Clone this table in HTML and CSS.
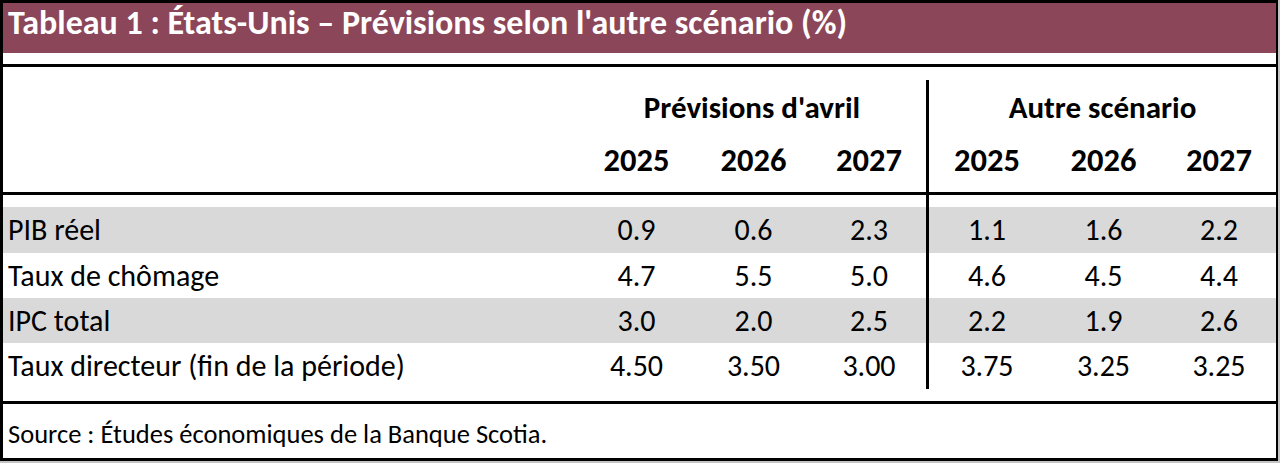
FILE: index.html
```html
<!DOCTYPE html>
<html lang="fr">
<head>
<meta charset="utf-8">
<title>Tableau 1</title>
<link rel="stylesheet" href="styles.css">
</head>
<body>
<div class="frame">
  <div class="title">Tableau 1 : États-Unis – Prévisions selon l'autre scénario (%)</div>
  <div class="title-gap"></div>
  <div class="table">
    <div class="row spacer-top"><div></div></div>
    <div class="row groups">
      <div class="label"></div>
      <div class="group g1">Prévisions d'avril</div>
      <div class="group g2 sep">Autre scénario</div>
    </div>
    <div class="row years">
      <div class="label"></div>
      <div class="cell">2025</div>
      <div class="cell">2026</div>
      <div class="cell">2027</div>
      <div class="cell sep">2025</div>
      <div class="cell">2026</div>
      <div class="cell">2027</div>
    </div>
    <div class="row gap">
      <div class="label"></div><div></div><div></div><div></div><div class="sep"></div><div></div><div></div>
    </div>
    <div class="row data shade tall">
      <div class="label">PIB réel</div>
      <div class="cell">0.9</div><div class="cell">0.6</div><div class="cell">2.3</div>
      <div class="cell sep">1.1</div><div class="cell">1.6</div><div class="cell">2.2</div>
    </div>
    <div class="row data">
      <div class="label">Taux de chômage</div>
      <div class="cell">4.7</div><div class="cell">5.5</div><div class="cell">5.0</div>
      <div class="cell sep">4.6</div><div class="cell">4.5</div><div class="cell">4.4</div>
    </div>
    <div class="row data shade">
      <div class="label">IPC total</div>
      <div class="cell">3.0</div><div class="cell">2.0</div><div class="cell">2.5</div>
      <div class="cell sep">2.2</div><div class="cell">1.9</div><div class="cell">2.6</div>
    </div>
    <div class="row data tall">
      <div class="label">Taux directeur (fin de la période)</div>
      <div class="cell">4.50</div><div class="cell">3.50</div><div class="cell">3.00</div>
      <div class="cell sep">3.75</div><div class="cell">3.25</div><div class="cell">3.25</div>
    </div>
    <div class="row spacer-bottom"><div></div></div>
  </div>
  <div class="source">Source : Études économiques de la Banque Scotia.</div>
</div>
</body>
</html>
```
FILE: styles.css
```css
html, body {
  margin: 0;
  padding: 0;
}
body {
  background: #c4c4c4;
  font-family: Carlito, Lato, "Open Sans", sans-serif;
  color: #000;
  width: 1280px;
  height: 463px;
  overflow: hidden;
}
.frame {
  box-sizing: border-box;
  width: 1278px;
  height: 461px;
  background: #fff;
  border-top: 3px solid #000;
  border-left: 3px solid #000;
  border-right: 2px solid #000;
  border-bottom: 3px solid #000;
  display: flex;
  flex-direction: column;
}
.title {
  box-sizing: border-box;
  height: 50px;
  background: #8c4659;
  color: #fff;
  font-weight: 700;
  font-size: 34px;
  line-height: 36px;
  padding: 2px 0 0 5px;
  white-space: nowrap;
}
.title-gap {
  height: 11px;
  border-bottom: 3px solid #000;
}
.table {
  display: flex;
  flex-direction: column;
}
.row {
  display: grid;
  grid-template-columns: 575px 117px 117px 114px 119px 117px 114px;
}
.row > div {
  box-sizing: border-box;
}
.sep {
  border-left: 3px solid #000;
}
.spacer-top {
  height: 13px;
}
.spacer-bottom {
  height: 12px;
}
.groups {
  height: 55px;
  font-weight: 700;
  font-size: 31px;
  line-height: 55px;
}
.group {
  text-align: center;
}
.g1 {
  grid-column: 2 / span 3;
}
.g2 {
  grid-column: 5 / span 3;
}
.years {
  height: 57px;
  border-bottom: 3px solid #000;
  box-sizing: content-box;
  font-weight: 700;
  font-size: 32.5px;
  line-height: 50px;
}
.years > div {
  padding-bottom: 7px;
}
.gap {
  height: 12px;
}
.data {
  height: 45px;
  font-size: 30px;
  line-height: 45px;
}
.data.tall {
  height: 46px;
  line-height: 46px;
}
.shade {
  background: #d9d9d9;
}
.label {
  padding-left: 5px;
  white-space: nowrap;
}
.cell {
  text-align: center;
}
.source {
  border-top: 3px solid #000;
  font-size: 26.5px;
  line-height: 48px;
  padding: 6px 0 0 5px;
  white-space: nowrap;
}
```
